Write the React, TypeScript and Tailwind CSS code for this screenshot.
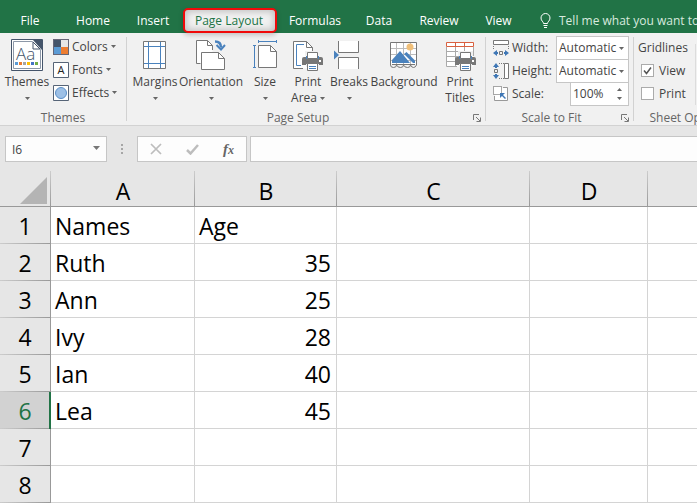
import { useState } from 'react'
import type { ReactNode } from 'react'
import { clsx } from 'clsx'

const tabs = [
  { name: 'File', width: 'w-[60px]' },
  { name: 'Home', width: 'w-[66px]' },
  { name: 'Insert', width: 'w-[54px]' },
  { name: 'Page Layout', width: 'w-[100px]' },
  { name: 'Formulas', width: 'w-[70px]' },
  { name: 'Data', width: 'w-[58px]' },
  { name: 'Review', width: 'w-[62px]' },
  { name: 'View', width: 'w-[57px]' },
]

const columns = ['A', 'B', 'C', 'D', '']

const rows = [
  ['Names', 'Age'],
  ['Ruth', '35'],
  ['Ann', '25'],
  ['Ivy', '28'],
  ['Ian', '40'],
  ['Lea', '45'],
  ['', ''],
  ['', ''],
]

function Caret() {
  return (
    <svg width="5" height="3" viewBox="0 0 5 3" className="shrink-0 fill-[#666]" aria-hidden="true">
      <path d="M0 0h5L2.500 3z" />
    </svg>
  )
}

function Icon({ size = 32, children }: { size?: number; children: ReactNode }) {
  return (
    <svg
      width={size}
      height={size}
      viewBox={`0 0 ${size} ${size}`}
      fill="none"
      className="shrink-0"
      aria-hidden="true"
    >
      {children}
    </svg>
  )
}

function ThemesIcon() {
  const dots = ['#5b9bd5', '#ed7d31', '#a5a5a5', '#ffc000', '#4472c4', '#70ad47']
  return (
    <Icon>
      <path d="M.5 .5h31v31H.5z" fill="#fff" stroke="#44546a" />
      <path d="M2.500 2.500h19l8 8v19h-27z" fill="#fff" stroke="#8d98a8" />
      <path d="M22 1h9v10l-1-1z" fill="#44546a" />
      <path d="M22 3v7h7z" fill="#fff" stroke="#44546a" />
      <text x="5" y="21" fontSize="17" fill="#44546a" className="font-['Open_Sans',sans-serif] font-light">
        Aa
      </text>
      {dots.map((color, i) => (
        <path key={color} d="M0 0h3v3h-3z" fill={color} transform={`translate(${4 + i * 4} 23)`} />
      ))}
    </Icon>
  )
}

function MarginsIcon() {
  return (
    <Icon>
      <path d="M4.500 2.500h22v27h-22z" fill="#fff" stroke="#777" />
      <path d="M9.500 3v26M21.500 3v26M5 7.500h21M5 24.500h21" stroke="#4a82bd" />
    </Icon>
  )
}

function OrientationIcon() {
  return (
    <Icon>
      <path d="M6 24.500H1.500v-23h11l5 5V13H6z" fill="#fff" />
      <path d="M5.500 24.500h-4v-23h11l5 5V11M12.500 1.500v5h5" stroke="#777" />
      <path d="M6.500 13.500h17l6 6v11h-23z" fill="#fff" stroke="#777" />
      <path d="M23.500 13.500v6h6" stroke="#777" />
      <path d="M20 2.500c4 0 6 2 6 6" stroke="#4a82bd" strokeWidth="2.500" />
      <path d="M21.500 6l4.500 4.500 4-4.500" stroke="#4a82bd" strokeWidth="2" />
    </Icon>
  )
}

function SizeIcon() {
  return (
    <Icon>
      <path d="M9.500 6.500h12l6 6v16h-18z" fill="#fff" stroke="#777" />
      <path d="M21.500 6.500v6h6" stroke="#777" />
      <path d="M9.500 1v3M27.500 1v3M9.500 2.500h18M4 6.500h3M4 28.500h3M5.500 6.500v22" stroke="#4a82bd" />
    </Icon>
  )
}

// 21 x 19, shared by both print icons
function Printer() {
  return (
    <g>
      <path d="M3 4h15v-5H3z" fill="#f1f1f1" />
      <path d="M2 5h17q2 0 2 2v6H0V7q0-2 2-2z" fill="#777" />
      <path d="M4 4h13v3H4z" fill="#4a82bd" />
      <path d="M5.500 .5h10v6h-10z" fill="#fff" stroke="#777" />
      <path d="M17 8h2v2h-2z" fill="#fff" />
      <path d="M4 12h13v3H4z" fill="#f1f1f1" />
      <path d="M5.500 11.500h10v7h-10z" fill="#fff" stroke="#777" />
      <path d="M7 14.500h7M7 16.500h7" stroke="#4a82bd" />
    </g>
  )
}

function PrintAreaIcon() {
  return (
    <Icon>
      <path d="M1.500 2.500h13l6 6v21h-19z" fill="#fff" />
      <path d="M11 29.500H1.500v-27h13l6 6V12M14.500 2.500v6h6" stroke="#777" />
      <path d="M12 5.500H4.500v21H9" stroke="#4a82bd" />
      <g transform="translate(10 13)">
        <Printer />
      </g>
    </Icon>
  )
}

function BreaksIcon() {
  return (
    <Icon>
      <path d="M5.500 2v11.500h20V2M5.500 30V18.500h20V30" fill="#fff" stroke="#777" />
      <path d="M1 11.500l5 4.500-5 4.500z" fill="#4a82bd" />
    </Icon>
  )
}

function BackgroundIcon() {
  return (
    <Icon>
      <path d="M2.500 3.500h26v22h-26z" fill="#fff" />
      <path d="M3 9.500h25M3 15.500h25M3 21.500h25M8.500 4v21M15.500 4v21M22.500 4v21" stroke="#bbb" />
      <path d="M4 24v-3l8-9 10 12z" fill="#4a82bd" />
      <path d="M18.500 13l8.500 8.500V24h-2l-9-9z" fill="#4a82bd" />
      <circle cx="22" cy="8" r="3.500" fill="#f0bf79" />
      <path d="M2.500 26V3.500h26V26M4 25.500h23M2.500 26q0 2.500 3 2.500t3-2.500q1 2.500 4 2.500t3-2.500q1 2.500 4 2.500t3-2.500q1 2.500 3 2.500t3-2.500" stroke="#777" />
    </Icon>
  )
}

function PrintTitlesIcon() {
  return (
    <Icon>
      <path d="M2.500 3.500h27v24h-27z" fill="#fff" />
      <path d="M2.500 8v19.500H13M11.500 8v19M20.500 8v5M29.500 8v9M3 12.500h26M3 17.500h12M3 22.500h10" stroke="#aaa" />
      <path d="M2.500 3.500h27v4h-27zM11.500 4v3M20.500 4v3" stroke="#d9603f" />
      <g transform="translate(11 13)">
        <Printer />
      </g>
    </Icon>
  )
}

function ColorsIcon() {
  return (
    <Icon size={16}>
      <path d="M0 0h16v16H0z" fill="#667" />
      <path d="M1 1h7v7H1z" fill="#44546a" />
      <path d="M8 1h7v7H8z" fill="#e7e6e6" />
      <path d="M1 8h7v7H1z" fill="#5b9bd5" />
      <path d="M8 8h7v7H8z" fill="#ed7d31" />
    </Icon>
  )
}

function FontsIcon() {
  return (
    <Icon size={16}>
      <path d="M.5 .5h15v15H.5z" fill="#fff" stroke="#566477" />
      <text x="8" y="12" fontSize="11" textAnchor="middle" fill="#222" className="font-['Open_Sans',sans-serif]">
        A
      </text>
    </Icon>
  )
}

function EffectsIcon() {
  return (
    <Icon size={16}>
      <path d="M.5 .5h15v15H.5z" fill="#fff" stroke="#566477" />
      <circle cx="8" cy="8" r="5.500" fill="#9dc0e6" stroke="#5b8fc7" />
    </Icon>
  )
}

function WidthIcon() {
  return (
    <Icon size={16}>
      <path d="M.5 .5h15v4H.5z" fill="#fff" stroke="#777" />
      <path d="M.5 6v4M15.500 6v4" stroke="#777" strokeDasharray="1 1" />
      <path d="M6.500 11.500h3v3h-3z" stroke="#777" />
      <path d="M0 13l4-3v2h1v2H4v2zM16 13l-4-3v2h-1v2h1v2z" fill="#3f77b5" />
    </Icon>
  )
}

function HeightIcon() {
  return (
    <Icon size={16}>
      <path d="M11.500 .5h4v15h-4z" fill="#fff" stroke="#777" />
      <path d="M6 .5h5M6 15.500h5" stroke="#777" strokeDasharray="1 1" />
      <path d="M1.500 6.500h3v3h-3z" stroke="#777" />
      <path d="M3 0l3 4H4v1H2V4H0zM3 16l3-4H4v-1H2v1H0z" fill="#3f77b5" />
    </Icon>
  )
}

function ScaleIcon() {
  return (
    <Icon size={16}>
      <path d="M10 1.500h4.500v13h-13V10" fill="#fff" stroke="#999" />
      <path d="M.5 .5h8v8h-8z" fill="#fff" stroke="#555" strokeDasharray="1 1" />
      <path d="M7 7h5l-2 2 3 3-1 1-3-3-2 2z" fill="#3f77b5" />
    </Icon>
  )
}

type RibbonButtonProps = {
  width: string
  icon: ReactNode
  label: string
  second?: string
  menu?: boolean
}
function RibbonButton({ width, icon, label, second, menu = true }: RibbonButtonProps) {
  return (
    <button type="button" className={clsx('flex shrink-0 flex-col items-center', width)}>
      {icon}
      <span className="mt-[3px] h-4 leading-4 whitespace-nowrap">{label}</span>
      <span className="flex h-4 items-center gap-[3px] leading-4 whitespace-nowrap">
        {second}
        {menu && <Caret />}
      </span>
    </button>
  )
}

function SmallButton({ icon, label }: { icon: ReactNode; label: string }) {
  return (
    <button type="button" className="flex h-[23px] items-center gap-[3px]">
      {icon}
      <span className="leading-4">{label}</span>
      <Caret />
    </button>
  )
}

function Launcher({ label }: { label: string }) {
  return (
    <button type="button" aria-label={label} className="absolute right-1 bottom-[3px]">
      <svg width="8" height="8" viewBox="0 0 8 8" fill="none" stroke="#777">
        <path d="M.5 6V.5H6M3 3l4 4M7.500 3.500v4h-4" />
      </svg>
    </button>
  )
}

type GroupProps = {
  title: string
  className: string
  launcher?: boolean
  children: ReactNode
}
function Group({ title, className, launcher, children }: GroupProps) {
  return (
    <section aria-label={title} className={clsx('relative flex shrink-0 flex-col justify-between', className)}>
      {children}
      <div className={clsx('text-center leading-[15px] text-[#666]', launcher && 'pr-4')}>{title}</div>
      {launcher && <Launcher label={`${title} settings`} />}
    </section>
  )
}

function Divider() {
  return <div className="mt-1 mb-1 w-px shrink-0 bg-[#d2d2d2]" />
}

function ScaleSelect({ icon, label }: { icon: ReactNode; label: string }) {
  return (
    <label className="flex h-[23px] items-center gap-[3px]">
      {icon}
      <span className="w-[41px]">{label}</span>
      <span className="relative h-6 w-[73px]">
        <select className="h-6 w-full appearance-none border border-[#c6c6c6] bg-white pl-[2px] leading-4 text-[#444]">
          <option>Automatic</option>
          <option>1 page</option>
        </select>
        <span className="pointer-events-none absolute top-[11px] right-[5px]">
          <Caret />
        </span>
      </span>
    </label>
  )
}

function Ribbon() {
  const [scale, setScale] = useState(100)
  return (
    <div className="flex h-[93px] overflow-hidden border-b border-[#d2d2d2] bg-[#f1f1f1] text-[12px] text-[#444]">
      <Group title="Themes" className="w-[126px]">
        <div className="flex gap-px pt-[6px]">
          <RibbonButton width="w-[50px] ml-[2px]" icon={<ThemesIcon />} label="Themes" />
          <div className="-mt-1 flex flex-col">
            <SmallButton icon={<ColorsIcon />} label="Colors" />
            <SmallButton icon={<FontsIcon />} label="Fonts" />
            <SmallButton icon={<EffectsIcon />} label="Effects" />
          </div>
        </div>
      </Group>
      <Divider />
      <Group title="Page Setup" className="w-[358px]" launcher>
        <div className="flex pt-[6px] pl-[3px]">
          <RibbonButton width="w-[50px]" icon={<MarginsIcon />} label="Margins" />
          <RibbonButton width="w-[62px]" icon={<OrientationIcon />} label="Orientation" />
          <RibbonButton width="w-[46px]" icon={<SizeIcon />} label="Size" />
          <RibbonButton width="w-[40px]" icon={<PrintAreaIcon />} label="Print" second="Area" />
          <RibbonButton width="w-[42px]" icon={<BreaksIcon />} label="Breaks" />
          <RibbonButton width="w-[68px]" icon={<BackgroundIcon />} label="Background" menu={false} />
          <RibbonButton width="w-[44px]" icon={<PrintTitlesIcon />} label="Print" second="Titles" menu={false} />
        </div>
      </Group>
      <Divider />
      <Group title="Scale to Fit" className="w-[147px]" launcher>
        <div className="flex flex-col pt-[3px] pl-[7px]">
          <ScaleSelect icon={<WidthIcon />} label="Width:" />
          <ScaleSelect icon={<HeightIcon />} label="Height:" />
          <div className="flex h-[23px] items-center gap-[3px]">
            <ScaleIcon />
            <label htmlFor="scale" className="w-[55px]">
              Scale:
            </label>
            <div className="flex h-6 w-[59px] border border-[#c6c6c6] bg-white">
              <input
                id="scale"
                value={`${scale}%`}
                onChange={(e) => setScale(parseInt(e.target.value) || 0)}
                className="w-[46px] min-w-0 pl-[2px] leading-4 outline-none"
              />
              <div className="flex flex-col justify-center gap-[6px]">
                <button type="button" aria-label="Increase scale" className="rotate-180" onClick={() => setScale(scale + 5)}>
                  <Caret />
                </button>
                <button type="button" aria-label="Decrease scale" onClick={() => setScale(scale - 5)}>
                  <Caret />
                </button>
              </div>
            </div>
          </div>
        </div>
      </Group>
      <Divider />
      <Group title="Sheet Options" className="w-[110px]">
        <div className="flex pt-[3px] pl-1">
          <div className="w-[57px]">
            <div className="h-[23px] leading-[23px]">Gridlines</div>
            <GridlineOption label="View" checked />
            <GridlineOption label="Print" />
          </div>
          <div className="mt-2 w-px bg-[#dcdcdc]" />
        </div>
      </Group>
    </div>
  )
}

function GridlineOption({ label, checked = false }: { label: string; checked?: boolean }) {
  return (
    <label className="flex h-[23px] items-center gap-[5px] pl-[3px]">
      <span className="relative size-[13px]">
        <input
          type="checkbox"
          defaultChecked={checked}
          className="peer block size-[13px] appearance-none border border-[#ababab] bg-white"
        />
        <svg
          viewBox="0 0 13 13"
          fill="none"
          className="pointer-events-none absolute inset-0 hidden peer-checked:block"
        >
          <path d="M3 6.500l2.500 3L10 3.500" stroke="#555" strokeWidth="1.500" />
        </svg>
      </span>
      {label}
    </label>
  )
}

function TabBar() {
  const [active, setActive] = useState('Page Layout')
  return (
    <nav className="flex h-[33px] items-end bg-[#217346] text-[12px] text-white">
      {tabs.map(({ name, width }) => (
        <button
          key={name}
          type="button"
          onClick={() => setActive(name)}
          className={clsx(
            'h-[25px] shrink-0 whitespace-nowrap',
            width,
            name === active && 'relative px-[3px] text-[#217346]'
          )}
        >
          {name === active ? (
            <span className="flex h-[25px] items-center justify-center rounded-[5px] border-2 border-[#f00a0a] bg-[#f1f1f1] pr-[2px] shadow-[inset_0_0_6px_2px_#c4c4c4,0_2px_5px_#0003]">
              {name}
            </span>
          ) : (
            name
          )}
        </button>
      ))}
      <button
        type="button"
        className="flex h-[25px] min-w-0 flex-1 items-center gap-2 overflow-hidden pl-[13px] whitespace-nowrap text-[#d8eadf]"
      >
        <svg width="11" height="16" viewBox="0 0 11 16" fill="none" stroke="#fff" className="shrink-0" aria-hidden="true">
          <path d="M3.500 10.500c0-2-2.500-2.500-2.500-5.500a4.500 4.500 0 0 1 9 0c0 3-2.500 3.500-2.500 5.500zM3.500 12.500h4M4 14.500h3" />
        </svg>
        Tell me what you want to do
      </button>
    </nav>
  )
}

function FormulaBar() {
  return (
    <div className="flex h-[45px] items-start pt-[10px] pl-[5px] text-[12px] text-[#444]">
      <label className="relative h-[26px] w-[102px] shrink-0">
        <input
          aria-label="Name box"
          defaultValue="I6"
          className="h-[26px] w-full border border-[#c6c6c6] bg-[#fdfdfd] px-[6px] outline-none"
        />
        <svg width="7" height="4" viewBox="0 0 7 4" className="absolute top-[10px] right-[7px] fill-[#777]">
          <path d="M0 0h7L3.500 4z" />
        </svg>
      </label>
      <svg width="30" height="26" viewBox="0 0 30 26" className="shrink-0 fill-[#a6a6a6]" aria-hidden="true">
        <path d="M14 8h2v2h-2zM14 12h2v2h-2zM14 16h2v2h-2z" />
      </svg>
      <div className="flex h-[26px] w-[110px] shrink-0 items-center justify-between border border-[#c6c6c6] bg-[#fdfdfd] px-3">
        <button type="button" aria-label="Cancel">
          <svg width="12" height="12" viewBox="0 0 12 12" stroke="#bdbdbd" strokeWidth="1.700">
            <path d="M1 1l10 10M11 1L1 11" />
          </svg>
        </button>
        <button type="button" aria-label="Enter">
          <svg width="13" height="11" viewBox="0 0 13 11" fill="none" stroke="#bdbdbd" strokeWidth="2.500">
            <path d="M1 6l3.500 3.500L12 1" />
          </svg>
        </button>
        <button
          type="button"
          aria-label="Insert function"
          className="flex items-baseline font-['Liberation_Serif',serif] text-[15px] leading-5 font-bold text-[#666] italic"
        >
          f<span className="text-[12px]">x</span>
        </button>
      </div>
      <input
        aria-label="Formula"
        className="ml-[3px] h-[26px] min-w-0 flex-1 border border-r-0 border-[#c6c6c6] bg-[#fdfdfd] px-2 outline-none"
      />
    </div>
  )
}

function Sheet() {
  const [row, setRow] = useState(6)
  return (
    <table className="w-full table-fixed border-separate border-spacing-0 bg-white text-[23px] leading-8 text-black">
      <colgroup>
        <col className="w-[51px]" />
        <col className="w-[144px]" />
        <col className="w-[142px]" />
        <col className="w-[193px]" />
        <col className="w-[118px]" />
        <col />
      </colgroup>
      <thead className="bg-[#e6e6e6]">
        <tr className="h-9">
          <th className="border-b border-[#999] bg-[linear-gradient(#ccc,#999)] bg-[length:1px_100%] bg-right bg-no-repeat p-0">
            <svg width="27" height="27" viewBox="0 0 27 27" className="mt-1 ml-5 fill-[#b4b4b4]" aria-hidden="true">
              <path d="M27 0v27H0z" />
            </svg>
          </th>
          {columns.map((c, i) => (
            <th
              key={i}
              scope="col"
              className={clsx(
                'border-b border-[#999] p-0 pt-1 leading-[30px] font-normal',
                c && 'bg-[linear-gradient(#ccc,#999)] bg-[length:1px_100%] bg-right bg-no-repeat'
              )}
            >
              {c}
            </th>
          ))}
        </tr>
      </thead>
      <tbody>
        {rows.map(([name, age], i) => (
          <tr key={i} className="h-[37px]" onClick={() => setRow(i + 1)}>
            <th
              scope="row"
              className={clsx(
                'border-r bg-[linear-gradient(90deg,#ccc,#999)] bg-[length:100%_1px] bg-bottom bg-no-repeat p-0 font-normal',
                row === i + 1
                  ? 'border-[#217346] bg-[#d2d2d2] text-[#217346] shadow-[inset_-1px_0_#217346]'
                  : 'border-[#999] bg-[#e6e6e6]'
              )}
            >
              {i + 1}
            </th>
            <td className="border-r border-b border-[#d4d4d4] p-0 pt-[2px] pl-1">{name}</td>
            <td
              className={clsx(
                'border-r border-b border-[#d4d4d4] p-0 pt-[2px]',
                i === 0 ? 'pl-1' : 'pr-[5px] text-right'
              )}
            >
              {age}
            </td>
            <td className="border-r border-b border-[#d4d4d4]" />
            <td className="border-r border-b border-[#d4d4d4]" />
            <td className="border-b border-[#d4d4d4]" />
          </tr>
        ))}
      </tbody>
    </table>
  )
}

export default function App() {
  return (
    <main className="min-h-screen bg-[#e6e6e6] font-['Open_Sans',sans-serif]">
      <TabBar />
      <Ribbon />
      <FormulaBar />
      <Sheet />
    </main>
  )
}
